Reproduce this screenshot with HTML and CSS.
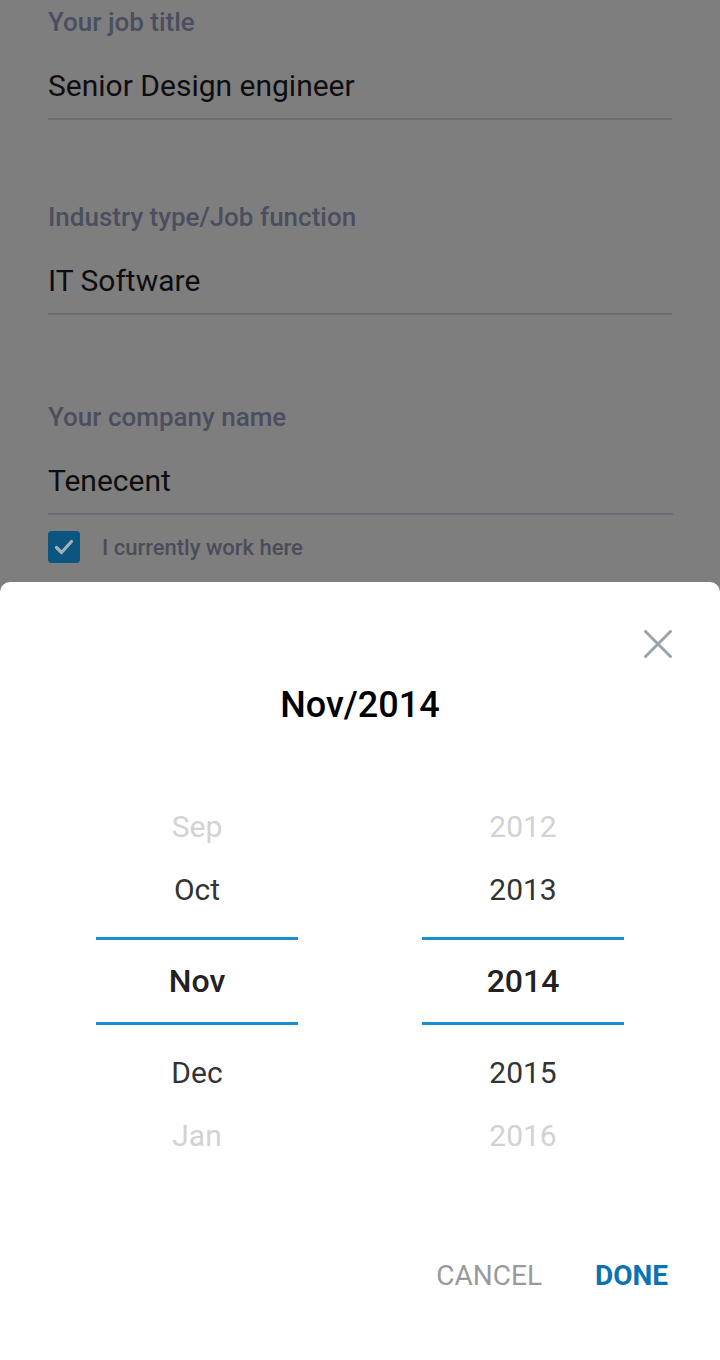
FILE: index.html
```html
<!DOCTYPE html>
<html lang="en">
<head>
<meta charset="utf-8">
<title>Edit position</title>
<link rel="stylesheet" href="styles.css">
</head>
<body>
<main class="form">
  <div class="field first">
    <div class="label">Your job title</div>
    <div class="value">Senior Design engineer</div>
  </div>
  <div class="field second">
    <div class="label">Industry type/Job function</div>
    <div class="value">IT Software</div>
  </div>
  <div class="field third">
    <div class="label">Your company name</div>
    <div class="value">Tenecent</div>
  </div>
  <div class="check-row">
    <span class="checkbox">
      <svg width="32" height="32" viewBox="0 0 32 32"><path d="M8.5 16.5 L13.5 21.5 L23.5 10.5" fill="none" stroke="#a7afb8" stroke-width="3.2" stroke-linecap="round" stroke-linejoin="round"/></svg>
    </span>
    <span class="check-label">I currently work here</span>
  </div>
</main>
<section class="sheet">
  <div class="sheet-head">
    <span class="close">
      <svg width="28" height="28" viewBox="0 0 28 28"><path d="M1.5 1.5 L26.5 26.5 M26.5 1.5 L1.5 26.5" stroke="#9aa2ac" stroke-width="3" stroke-linecap="round"/></svg>
    </span>
  </div>
  <h1 class="title">Nov/2014</h1>
  <div class="picker">
    <div class="col">
      <div class="item far">Sep</div>
      <div class="item">Oct</div>
      <div class="item sel">Nov</div>
      <div class="item">Dec</div>
      <div class="item far">Jan</div>
    </div>
    <div class="col">
      <div class="item far">2012</div>
      <div class="item">2013</div>
      <div class="item sel">2014</div>
      <div class="item">2015</div>
      <div class="item far">2016</div>
    </div>
  </div>
  <div class="actions">
    <span class="btn cancel">CANCEL</span>
    <span class="btn done">DONE</span>
  </div>
</section>
</body>
</html>
```
FILE: styles.css
```css
html, body {
  margin: 0;
  padding: 0;
}
body {
  width: 720px;
  height: 1360px;
  overflow: hidden;
  background: #7f7e7f;
  font-family: Roboto, "Liberation Sans", sans-serif;
}
.form {
  padding: 6px 48px 0 48px;
  height: 576px;
}
.field {
  border-bottom: 2px solid #6c6d72;
  margin-bottom: 81px;
}
.field.second {
  margin-bottom: 86px;
}
.field.third {
  margin-bottom: 0;
  margin-right: -1px;
}
.label {
  font-size: 26px;
  line-height: 32px;
  font-weight: 500;
  color: #4a4e5e;
}
.value {
  margin-top: 28px;
  padding-bottom: 12px;
  font-size: 30px;
  line-height: 40px;
  color: #0e0e10;
}
.check-row {
  display: flex;
  align-items: center;
  gap: 22px;
  margin-top: 16px;
}
.checkbox {
  width: 32px;
  height: 32px;
  border-radius: 4px;
  background: #0b5581;
  display: block;
}
.checkbox svg {
  display: block;
}
.check-label {
  font-size: 22px;
  font-weight: 500;
  color: #4a4d59;
}
.sheet {
  background: #ffffff;
  border-radius: 10px 10px 0 0;
  height: 778px;
  padding: 48px 48px 0 48px;
  box-sizing: border-box;
}
.sheet-head {
  display: flex;
  justify-content: flex-end;
  height: 28px;
}
.close svg {
  display: block;
}
.title {
  margin: 27px 0 0 0;
  text-align: center;
  font-size: 36px;
  line-height: 40px;
  font-weight: 500;
  color: #000000;
}
.picker {
  display: flex;
  justify-content: center;
  gap: 124px;
  margin-top: 70px;
}
.col {
  width: 202px;
  display: flex;
  flex-direction: column;
}
.item {
  height: 63px;
  display: flex;
  align-items: center;
  justify-content: center;
  font-size: 30px;
  color: #333333;
}
.item.far {
  color: #d2d2d2;
}
.item.sel {
  height: 82px;
  margin: 16px 0;
  border-top: 3px solid #1b8dd0;
  border-bottom: 3px solid #1b8dd0;
  font-size: 32px;
  font-weight: 500;
  color: #222222;
}
.actions {
  display: flex;
  justify-content: flex-end;
  align-items: center;
  gap: 53px;
  margin-top: 88px;
  padding-right: 4px;
  height: 40px;
}
.btn {
  font-size: 28px;
}
.cancel {
  color: #9a9a9a;
}
.done {
  color: #0a73b1;
  font-weight: 700;
}
```
